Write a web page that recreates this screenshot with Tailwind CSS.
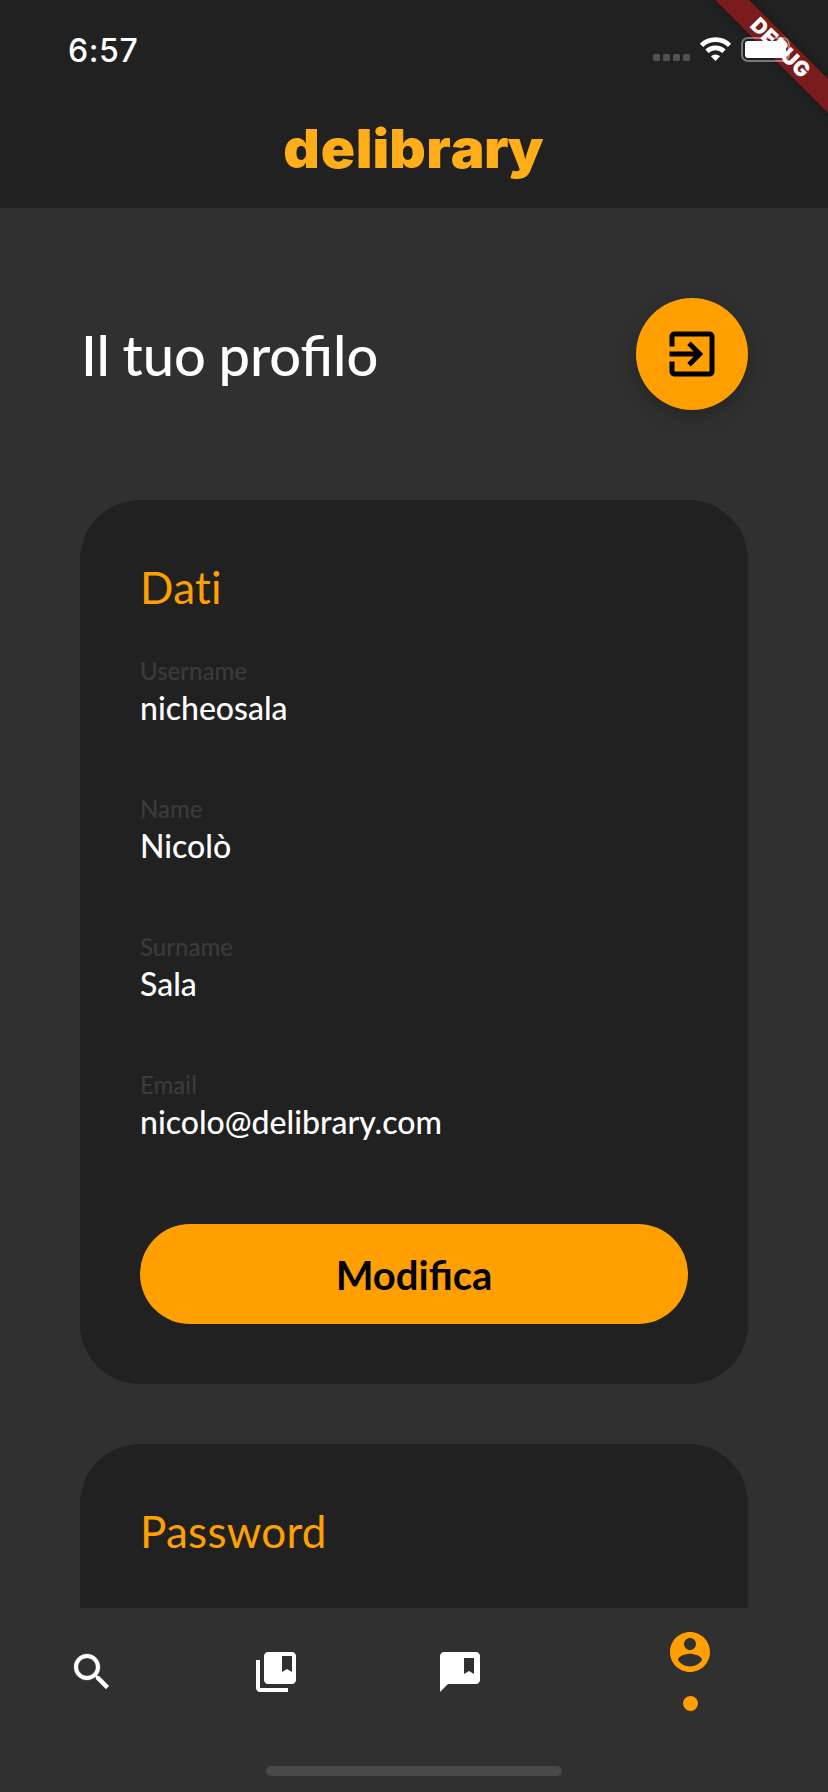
<!DOCTYPE html>
<html lang="it">
<head>
<meta charset="utf-8">
<title>delibrary</title>
<script src="https://cdn.jsdelivr.net/npm/@tailwindcss/browser@4"></script>
</head>
<body class="bg-[#303030]">
<div class="relative w-[828px] h-[1792px] overflow-hidden flex flex-col bg-[#303030] text-white font-[Lato,sans-serif]">
  <header class="h-[208px] shrink-0 bg-[#212121] flex flex-col">
    <div class="h-[100px] flex items-center justify-between pl-[68px] pt-px">
      <span class="font-[Inter,sans-serif] font-medium text-[32px] leading-none tracking-[0.6px]">6:57</span>
    </div>
    <svg class="w-[828px] h-[108px]" viewBox="0 100 828 108" fill="#ffae1a">
      <text transform="scale(1.06 1)" y="168" x="267.200 302.600 335.600 351.400 367.300 402.200 425.300 456.500 478.800" font-family="Inter, sans-serif" font-weight="900" font-size="53.500">delibrary</text>
    </svg>
  </header>

  <main class="h-[1400px] shrink-0 overflow-hidden px-20 pt-[90px]">
    <div class="flex items-center justify-between h-28">
      <h1 class="text-[56px] leading-none font-medium pl-[1px] pt-0.5 [word-spacing:-1.6px]">Il tuo profilo</h1>
      <button class="size-28 rounded-full bg-[#ffa000] flex items-center justify-center shadow-[0_6px_20px_rgba(0,0,0,0.24)]">
        <svg class="w-[60px] h-[60px]" viewBox="0 0 24 24" fill="#000"><path d="M10.090 15.590L11.500 17l5-5-5-5-1.410 1.410L12.670 11H3v2h9.670l-2.580 2.590zM19 3H5c-1.110 0-2 .9-2 2v4h2V5h14v14H5v-4H3v4c0 1.100.89 2 2 2h14c1.100 0 2-.9 2-2V5c0-1.100-.9-2-2-2z"/></svg>
      </button>
    </div>

    <section class="mt-[90px] h-[884px] rounded-[60px] bg-[#212121] px-[60px] pt-[59px]">
      <h2 class="text-[44px] leading-[56px] text-[#ffa000] tracking-[0.25px]">Dati</h2>
      <dl class="mt-[41px] text-[32px] font-medium">
        <div class="h-[138px]"><dt class="text-[24px] leading-[30px] text-[#3b3b3b]">Username</dt><dd class="leading-[40px] mt-[2px]">nicheosala</dd></div>
        <div class="h-[138px]"><dt class="text-[24px] leading-[30px] text-[#3b3b3b]">Name</dt><dd class="leading-[40px] mt-[2px]">Nicolò</dd></div>
        <div class="h-[138px]"><dt class="text-[24px] leading-[30px] text-[#3b3b3b]">Surname</dt><dd class="leading-[40px] mt-[2px]">Sala</dd></div>
        <div class="h-[138px]"><dt class="text-[24px] leading-[30px] text-[#3b3b3b]">Email</dt><dd class="leading-[40px] mt-[2px]">nicolo@delibrary.com</dd></div>
      </dl>
      <button class="mt-[16px] w-full h-[100px] rounded-full bg-[#ffa000] text-black text-[40px] font-bold flex items-center justify-center pt-0.5">Modifica</button>
    </section>

    <section class="mt-[60px] h-[400px] rounded-[60px] bg-[#212121] px-[60px] pt-[59px]">
      <h2 class="text-[44px] leading-[56px] text-[#ffa000] tracking-[0.25px]">Password</h2>
    </section>
  </main>

  <nav class="grow flex flex-col">
    <div class="flex h-[158px] pl-[68px]">
      <a class="w-[184px] pt-10"><svg class="size-12" viewBox="0 0 24 24" fill="#fff"><path stroke="#fff" stroke-width=".15" d="M15.500 14h-.79l-.28-.27C15.410 12.590 16 11.110 16 9.500 16 5.910 13.090 3 9.500 3S3 5.910 3 9.500 5.910 16 9.500 16c1.610 0 3.090-.590 4.230-1.570l.27.28v.79l5 4.990L20.490 19l-4.990-5zm-6 0C7.010 14 5 11.990 5 9.500S7.010 5 9.500 5 14 7.010 14 9.500 11.990 14 9.500 14z"/></svg></a>
      <a class="w-[184px] pt-10"><svg class="size-12" viewBox="0 0 24 24" fill="#fff"><path d="M4 6H2v14c0 1.100.9 2 2 2h14v-2H4V6zM20 2H8c-1.100 0-2 .9-2 2v12c0 1.100.9 2 2 2h12c1.100 0 2-.9 2-2V4c0-1.100-.9-2-2-2zm0 10l-2.500-1.500L15 12V4h5v8z"/></svg></a>
      <a class="w-[230px] pt-10"><svg class="size-12" viewBox="0 0 24 24" fill="#fff"><path d="M20 2H4c-1.100 0-2 .9-2 2v18l4-4h14c1.100 0 2-.9 2-2V4c0-1.100-.9-2-2-2zm-1 11l-2.500-1.500L14 13V5h5v8z"/></svg></a>
      <a class="w-12 pt-5 flex flex-col items-center"><svg class="size-12" viewBox="0 0 24 24" fill="#ffa000"><path d="M12 2C6.480 2 2 6.480 2 12s4.480 10 10 10 10-4.480 10-10S17.520 2 12 2zm0 3c1.660 0 3 1.340 3 3s-1.340 3-3 3-3-1.340-3-3 1.340-3 3-3zm0 14.200c-2.500 0-4.710-1.280-6-3.220.030-1.990 4-3.080 6-3.080 1.990 0 5.970 1.090 6 3.080-1.290 1.940-3.500 3.220-6 3.220z"/></svg><span class="mt-5 size-[15px] rounded-full bg-[#ffa000]"></span></a>
    </div>
    <div class="w-[296px] h-[10px] rounded-full bg-[#494949] mx-auto"></div>
  </nav>

  <svg class="absolute top-0 left-0 w-[828px] h-[140px]" viewBox="0 0 828 140">
    <defs><filter id="s" x="-20%" y="-80%" width="140%" height="260%"><feGaussianBlur stdDeviation="5"/></filter></defs>
    <g transform="translate(780.200 48) rotate(45)">
      <rect x="-120" y="-12" width="240" height="24" fill="#000" opacity=".35" filter="url(#s)"/>
      <rect x="-120" y="-12.100" width="240" height="24.200" fill="#7b1b1c"/>
      <text x="0" y="7" text-anchor="middle" font-family="Inter, sans-serif" font-weight="900" font-size="21" letter-spacing=".3" fill="#fff">DEBUG</text>
    </g>
    <g fill="#525252"><rect x="653" y="54" width="7" height="7" rx="1.500"/><rect x="663" y="54" width="7" height="7" rx="1.500"/><rect x="673" y="54" width="7" height="7" rx="1.500"/><rect x="683" y="54" width="7" height="7" rx="1.500"/></g>
    <g fill="none" stroke="#fff" stroke-width="4.800"><path d="M701.500 45.400a20 20 0 0 1 28 0"/><path d="M707 51.200a12.300 12.300 0 0 1 17 0"/></g>
    <path d="M715.500 61l-4.600-4.700a6.800 6.800 0 0 1 9.200 0z" fill="#fff"/>
    <rect x="742" y="38" width="47" height="23" rx="6" fill="none" stroke="#fff" stroke-opacity=".4" stroke-width="2"/>
    <rect x="745" y="41" width="41" height="17" rx="3" fill="#fff"/>
  </svg>
</div>
</body>
</html>
